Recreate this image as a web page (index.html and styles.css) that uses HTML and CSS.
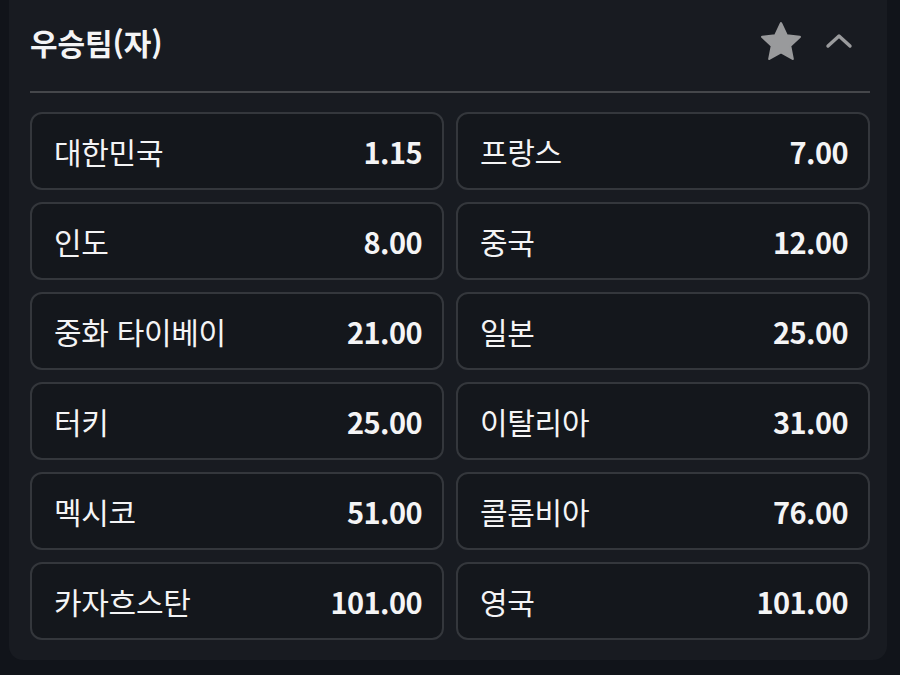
FILE: index.html
```html
<!DOCTYPE html>
<html lang="ko">
<head>
<meta charset="utf-8">
<link rel="stylesheet" href="styles.css">
</head>
<body>
<div class="panel">
  <div class="header">
    <h2 class="title">우승팀(자)</h2>
    <div class="actions">
      <svg class="star" width="46" height="46" viewBox="0 0 24 24"><path d="M12 2.2l2.95 6.3 6.85.8-5.05 4.7 1.35 6.8L12 17.4l-6.1 3.4 1.35-6.8L2.2 9.3l6.85-.8z" fill="#999a9c" stroke="#999a9c" stroke-width="1.2" stroke-linejoin="round"/></svg>
      <svg class="chev" width="28" height="18" viewBox="0 0 28 18"><path d="M3 14L14 4l11 10" fill="none" stroke="#9a9b9d" stroke-width="3.4" stroke-linecap="round" stroke-linejoin="round"/></svg>
    </div>
  </div>
  <div class="divider"></div>
  <div class="grid">
    <div class="card"><span class="name">대한민국</span><span class="odds">1.15</span></div>
    <div class="card"><span class="name">프랑스</span><span class="odds">7.00</span></div>
    <div class="card"><span class="name">인도</span><span class="odds">8.00</span></div>
    <div class="card"><span class="name">중국</span><span class="odds">12.00</span></div>
    <div class="card"><span class="name">중화 타이베이</span><span class="odds">21.00</span></div>
    <div class="card"><span class="name">일본</span><span class="odds">25.00</span></div>
    <div class="card"><span class="name">터키</span><span class="odds">25.00</span></div>
    <div class="card"><span class="name">이탈리아</span><span class="odds">31.00</span></div>
    <div class="card"><span class="name">멕시코</span><span class="odds">51.00</span></div>
    <div class="card"><span class="name">콜롬비아</span><span class="odds">76.00</span></div>
    <div class="card"><span class="name">카자흐스탄</span><span class="odds">101.00</span></div>
    <div class="card"><span class="name">영국</span><span class="odds">101.00</span></div>
  </div>
</div>
</body>
</html>
```
FILE: styles.css
```css
html, body {
  margin: 0;
  padding: 0;
  background: #11141a;
  font-family: "Noto Sans CJK KR", "Noto Sans", sans-serif;
  color: #f4f4f5;
}
.panel {
  width: 878px;
  margin-left: 9px;
  height: 660px;
  box-sizing: border-box;
  background: #181b21;
  border-radius: 0 0 14px 14px;
  padding: 0 17px 0 21px;
}
.header {
  height: 91px;
  display: flex;
  align-items: center;
  justify-content: space-between;
  padding-bottom: 8px;
  box-sizing: border-box;
}
.title {
  margin: 0;
  font-size: 30px;
  font-weight: 700;
  letter-spacing: -0.1px;
}
.actions {
  display: flex;
  align-items: center;
  gap: 21px;
  padding-right: 17px;
}
.chev { margin-top: -2px; }
.divider {
  height: 2px;
  background: #45474b;
  margin-bottom: 19px;
}
.grid {
  display: grid;
  grid-template-columns: 1fr 1fr;
  column-gap: 12px;
  row-gap: 12px;
}
.card {
  height: 78px;
  box-sizing: border-box;
  border: 2px solid #34373c;
  border-radius: 12px;
  background: #14171c;
  display: flex;
  align-items: center;
  justify-content: space-between;
  padding: 0 20px 0 22px;
}
.name {
  font-size: 30px;
  font-weight: 400;
  letter-spacing: -0.3px;
}
.odds {
  font-size: 29px;
  font-weight: 700;
  letter-spacing: -0.6px;
}
```
